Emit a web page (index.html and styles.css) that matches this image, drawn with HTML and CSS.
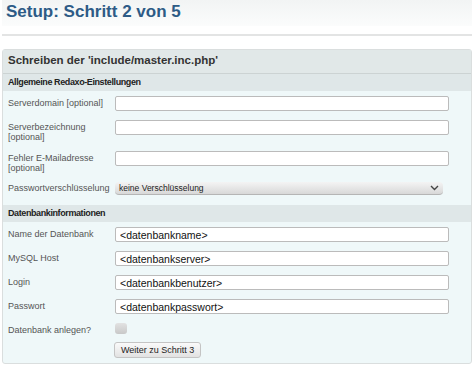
FILE: index.html
```html
<!DOCTYPE html>
<html lang="de">
<head>
    <meta charset="UTF-8">
    <title>Setup: Schritt 2 von 5</title>
    <link rel="stylesheet" href="styles.css">
</head>
<body>
    <h1 class="page-title">Setup: Schritt 2 von 5</h1>
    <div class="rule"></div>

    <form class="panel">
        <h2 class="panel-head">Schreiben der 'include/master.inc.php'</h2>

        <div class="group-head">Allgemeine Redaxo-Einstellungen</div>
        <div class="row">
            <label for="serverdomain">Serverdomain [optional]</label>
            <input type="text" id="serverdomain">
        </div>
        <div class="row">
            <label for="servername">Serverbezeichnung<br>[optional]</label>
            <input type="text" id="servername">
        </div>
        <div class="row">
            <label for="errormail">Fehler E-Mailadresse<br>[optional]</label>
            <input type="text" id="errormail">
        </div>
        <div class="row row-select">
            <label for="crypt">Passwortverschlüsselung</label>
            <div class="select">
                <span>keine Verschlüsselung</span>
                <svg width="9" height="6" viewBox="0 0 9 6"><path d="M1 1 L4.5 4.5 L8 1" fill="none" stroke="#444" stroke-width="1.4"/></svg>
            </div>
        </div>

        <div class="group-head">Datenbankinformationen</div>
        <div class="row">
            <label for="dbname">Name der Datenbank</label>
            <input type="text" id="dbname" class="filled" value="&lt;datenbankname&gt;">
        </div>
        <div class="row">
            <label for="dbhost">MySQL Host</label>
            <input type="text" id="dbhost" class="filled" value="&lt;datenbankserver&gt;">
        </div>
        <div class="row">
            <label for="dblogin">Login</label>
            <input type="text" id="dblogin" class="filled" value="&lt;datenbankbenutzer&gt;">
        </div>
        <div class="row">
            <label for="dbpass">Passwort</label>
            <input type="text" id="dbpass" class="filled" value="&lt;datenbankpasswort&gt;">
        </div>
        <div class="row">
            <label>Datenbank anlegen?</label>
            <span class="checkbox"></span>
        </div>
        <div class="row row-button">
            <span></span>
            <button type="button">Weiter zu Schritt 3</button>
        </div>
    </form>
</body>
</html>
```

FILE: styles.css
```css
body {
    margin: 0;
    background-color: #fff;
    font-family: "Liberation Sans", Arial, sans-serif;
    color: #555;
    height: 366px;
    overflow: hidden;
}
.page-title {
    margin: 0 2px;
    height: 26px;
    padding: 1px 0 0 4px;
    box-sizing: border-box;
    font-size: 17px;
    line-height: 22px;
    color: #2d5b86;
    background: linear-gradient(#f2f4f4, #fbfcfc);
}
.rule {
    margin: 8px 2px 0;
    height: 2px;
    background-color: #e3e4e4;
}
.panel {
    margin: 13px 2px 0;
    border: 1px solid #dadede;
    border-radius: 3px;
    background-color: #eff8f9;
    height: 315px;
    box-sizing: border-box;
}
.panel-head {
    margin: 0;
    height: 24px;
    padding: 4px 0 0 5px;
    box-sizing: border-box;
    font-size: 11.5px;
    font-weight: bold;
    color: #333;
    background-color: #e1e8e8;
    border-bottom: 1px solid #ccd3d3;
}
.group-head {
    height: 17px;
    padding: 3px 0 0 5px;
    box-sizing: border-box;
    font-size: 9px;
    font-weight: bold;
    color: #222;
    background-color: #dfe7e8;
    letter-spacing: -0.4px;
}
.row {
    display: flex;
    align-items: flex-start;
    padding: 5px 0 4px 5px;
}
.row label {
    width: 107px;
    flex-shrink: 0;
    padding-top: 2px;
    font-size: 9px;
    line-height: 10px;
}
.row input {
    width: 334px;
    height: 15px;
    margin: 0;
    padding: 0 4px;
    box-sizing: border-box;
    border: 1px solid #bbb;
    border-radius: 2px;
    background-color: #fff;
    font-family: "Liberation Sans", Arial, sans-serif;
    font-size: 10.5px;
    color: #111;
}
.row-select {
    padding-top: 4px;
    padding-bottom: 10px;
}
.select {
    width: 328px;
    height: 13px;
    margin-top: 1px;
    padding: 0 4px;
    box-sizing: border-box;
    display: flex;
    align-items: center;
    justify-content: space-between;
    border-radius: 4px;
    border-bottom: 1px solid #b5b5b5;
    background: linear-gradient(#f4f4f4, #d8d8d8);
    font-size: 8.5px;
    color: #222;
}
.checkbox {
    width: 12px;
    height: 11px;
    border-radius: 3px;
    background: linear-gradient(#e2e2e2, #c8c8c8);
}
.row-button {
    padding-top: 3px;
}
.row-button span {
    width: 106px;
    flex-shrink: 0;
}
button {
    height: 16px;
    padding: 0 6px;
    border: 1px solid #c4c4c4;
    border-radius: 3px;
    background: linear-gradient(#fafafa, #e2e2e2);
    font-family: "Liberation Sans", Arial, sans-serif;
    font-size: 9px;
    color: #222;
}
```
